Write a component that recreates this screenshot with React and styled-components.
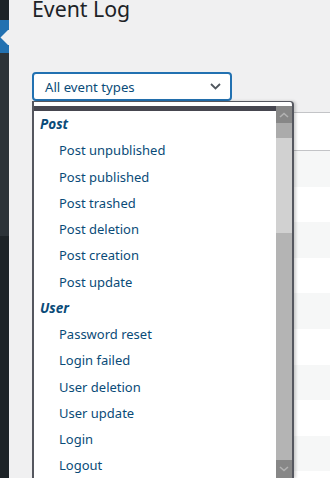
import React from "react";
import styled, { createGlobalStyle } from "styled-components";

const GlobalStyle = createGlobalStyle`
  html, body { margin: 0; padding: 0; }
  body {
    background: #f0f0f1;
    overflow: hidden;
    font-family: "Noto Sans", "Open Sans", sans-serif;
  }
`;

const Layout = styled.div`
  display: flex;
  height: 478px;
  overflow: hidden;
`;

const Sidebar = styled.nav`
  width: 9px;
  flex: none;
  display: flex;
  flex-direction: column;
  background: #1d2327;
`;

const SideBlock = styled.div`
  height: ${(p) => p.$h}px;
  flex: ${(p) => (p.$grow ? 1 : "none")};
  background: ${(p) => p.$bg};
  svg { display: block; }
`;

const Main = styled.main`
  flex: 1;
  min-width: 0;
  padding-left: 23px;
  overflow: hidden;
`;

const Title = styled.h1`
  margin: -2px 0 0;
  font-size: 21.3px;
  line-height: 21px;
  font-weight: 400;
  color: #1d2327;
`;

const Toolbar = styled.div`
  position: relative;
  margin-top: 53px;
  height: 29px;
`;

const SelectBox = styled.div`
  box-sizing: border-box;
  width: 200px;
  height: 29px;
  border: 2px solid #2271b1;
  border-radius: 4px;
  background: #fff;
  display: flex;
  align-items: center;
  justify-content: space-between;
  padding: 0 9px 0 11px;
  font-size: 13.2px;
  color: #0a4b78;
`;

const Chevron = styled.svg`
  display: block;
`;

const List = styled.div`
  position: absolute;
  top: 29px;
  left: 0;
  box-sizing: border-box;
  width: 262px;
  height: 377px;
  background: #fff;
  border-style: solid;
  border-color: #55575f;
  border-width: 1px 2px 0 2px;
  border-top-right-radius: 4px;
  box-shadow: 2px 0 3px rgba(0, 0, 0, 0.18);
  padding-top: 4px;
  display: flex;
  flex-direction: column;
  z-index: 2;
`;

const ListBody = styled.div`
  flex: 1;
  display: flex;
  min-height: 0;
`;

const Options = styled.div`
  flex: 1;
  border-top: 5px solid #46464f;
  overflow: hidden;
`;

const Group = styled.div`
  height: 26.25px;
  line-height: 26.25px;
  padding-left: 6px;
  font-size: 13.5px;
  font-weight: 700;
  font-style: italic;
  color: #0a4b78;
`;

const Option = styled.div`
  height: 26.25px;
  line-height: 26.25px;
  padding-left: 25px;
  font-size: 13px;
  color: #0a4b78;
  white-space: nowrap;
`;

const Scrollbar = styled.div`
  width: 16px;
  flex: none;
  display: flex;
  flex-direction: column;
`;

const ScrollPart = styled.div`
  height: ${(p) => p.$h}px;
  flex: ${(p) => (p.$grow ? 1 : "none")};
  background: ${(p) => p.$bg};
  display: flex;
  align-items: center;
  justify-content: center;
`;

const Table = styled.div`
  margin-top: 11px;
  width: 340px;
  border: 1px solid #c3c4c7;
  background: #fff;
`;

const THead = styled.div`
  height: 37px;
  border-bottom: 1px solid #c3c4c7;
`;

const Row = styled.div`
  height: 35.6px;
  background: ${(p) => (p.$striped ? "#f6f7f7" : "#fff")};
`;

const groups = [
  {
    label: "Post",
    items: [
      "Post unpublished",
      "Post published",
      "Post trashed",
      "Post deletion",
      "Post creation",
      "Post update",
    ],
  },
  {
    label: "User",
    items: [
      "Password reset",
      "Login failed",
      "User deletion",
      "User update",
      "Login",
      "Logout",
    ],
  },
];

const Arrow = ({ up }) => (
  <svg width="10" height="6" viewBox="0 0 10 6">
    <polyline
      points={up ? "1,5 5,1.5 9,5" : "1,1 5,4.5 9,1"}
      fill="none"
      stroke="#b3b3b3"
      strokeWidth="1.6"
    />
  </svg>
);

export default function App() {
  return (
    <>
      <GlobalStyle />
      <Layout>
        <Sidebar>
          <SideBlock $h={20} $bg="#1d2327" />
          <SideBlock $h={33} $bg="#2271b1">
            <svg width="9" height="33" viewBox="0 0 9 33">
              <polygon points="0.5,17.5 8,10 9,10 9,25 8,25" fill="#f0f0f1" />
            </svg>
          </SideBlock>
          <SideBlock $h={183} $bg="#2c3338" />
          <SideBlock $grow $bg="#1d2327" />
        </Sidebar>
        <Main>
          <Title>Event Log</Title>
          <Toolbar>
            <SelectBox>
              <span>All event types</span>
              <Chevron width="11" height="7" viewBox="0 0 11 7">
                <polyline
                  points="1,1 5.5,5.5 10,1"
                  fill="none"
                  stroke="#50575e"
                  strokeWidth="1.8"
                />
              </Chevron>
            </SelectBox>
            <List>
              <ListBody>
                <Options>
                  {groups.map((g) => (
                    <React.Fragment key={g.label}>
                      <Group>{g.label}</Group>
                      {g.items.map((it) => (
                        <Option key={it}>{it}</Option>
                      ))}
                    </React.Fragment>
                  ))}
                </Options>
                <Scrollbar>
                  <ScrollPart $h={17} $bg="#878787">
                    <Arrow up />
                  </ScrollPart>
                  <ScrollPart $h={15} $bg="#ababab" />
                  <ScrollPart $h={95} $bg="#d1d1d1" />
                  <ScrollPart $grow $bg="#b4b4b4" />
                  <ScrollPart $h={18} $bg="#878787">
                    <Arrow />
                  </ScrollPart>
                </Scrollbar>
              </ListBody>
            </List>
          </Toolbar>
          <Table>
            <THead />
            {Array.from({ length: 10 }).map((_, i) => (
              <Row key={i} $striped={i % 2 === 0} />
            ))}
          </Table>
        </Main>
      </Layout>
    </>
  );
}
